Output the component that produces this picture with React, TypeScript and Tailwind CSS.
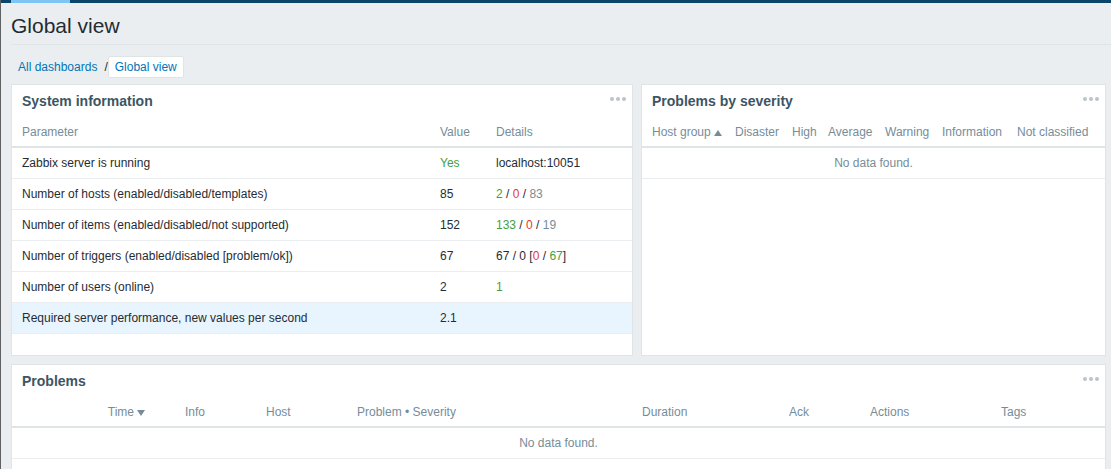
import type { ReactNode } from "react";

const GREEN = "text-[#429e47]";
const RED = "text-[#e33734]";
const GREY = "text-[#768d99]";

type Column = { label: ReactNode; width: string; align?: string; sort?: "ascending" | "descending" };

function SortArrow({ up }: { up?: boolean }) {
  return (
    <svg width="8" height="6" viewBox="0 0 8 6" className="mt-0.5 fill-[#768d99]" aria-hidden="true">
      <path d={up ? "M4 0L8 6H0Z" : "M0 0H8L4 6Z"} />
    </svg>
  );
}

function Panel({ title, className = "", children }: { title: string; className?: string; children: ReactNode }) {
  return (
    <section className={`min-w-0 border border-[#dfe4e7] bg-white ${className}`}>
      <header className="flex h-8 items-center justify-between pr-1.5 pl-2.5">
        <h2 className="text-sm font-bold text-[#3c5563]">{title}</h2>
        <button type="button" aria-label={`${title} actions`} className="-mt-1 cursor-pointer">
          <svg width="16" height="4" viewBox="0 0 16 4" className="block fill-[#b9c5cc]" aria-hidden="true">
            <circle cx="2" cy="2" r="2" />
            <circle cx="8" cy="2" r="2" />
            <circle cx="14" cy="2" r="2" />
          </svg>
        </button>
      </header>
      <div className="overflow-x-auto">{children}</div>
    </section>
  );
}

function Table({ columns, children }: { columns: Column[]; children: ReactNode }) {
  return (
    <table className="w-full table-fixed border-separate border-spacing-0 whitespace-nowrap">
      <thead>
        <tr>
          {columns.map((c, i) => (
            <th
              key={i}
              scope="col"
              aria-sort={c.sort}
              className={`h-[31px] border-b-2 border-[#dfe4e7] pl-2.5 font-normal text-[#768d99] ${c.width} ${c.align ?? "text-left"}`}
            >
              {c.sort ? (
                <a href="#sort" className="inline-flex items-center gap-[3px]">
                  {c.label}
                  <SortArrow up={c.sort === "ascending"} />
                </a>
              ) : (
                c.label
              )}
            </th>
          ))}
        </tr>
      </thead>
      <tbody>{children}</tbody>
    </table>
  );
}

function NoData({ span }: { span: number }) {
  return (
    <tr>
      <td colSpan={span} className="h-[31px] border-b border-[#ebeef0] text-center text-[#768d99]">
        No data found.
      </td>
    </tr>
  );
}

const infoColumns: Column[] = [
  { label: "Parameter", width: "w-[418px]" },
  { label: "Value", width: "w-[56px]" },
  { label: "Details", width: "w-[146px]" },
];

const infoRows: { name: string; value: ReactNode; details?: ReactNode; active?: boolean }[] = [
  { name: "Zabbix server is running", value: <span className={GREEN}>Yes</span>, details: "localhost:10051" },
  {
    name: "Number of hosts (enabled/disabled/templates)",
    value: "85",
    details: (
      <>
        <span className={GREEN}>2</span> / <span className={RED}>0</span> / <span className={GREY}>83</span>
      </>
    ),
  },
  {
    name: "Number of items (enabled/disabled/not supported)",
    value: "152",
    details: (
      <>
        <span className={GREEN}>133</span> / <span className={RED}>0</span> / <span className={GREY}>19</span>
      </>
    ),
  },
  {
    name: "Number of triggers (enabled/disabled [problem/ok])",
    value: "67",
    details: (
      <>
        67 / 0 [<span className={RED}>0</span> / <span className={GREEN}>67</span>]
      </>
    ),
  },
  { name: "Number of users (online)", value: "2", details: <span className={GREEN}>1</span> },
  { name: "Required server performance, new values per second", value: "2.1", active: true },
];

const severityColumns: Column[] = [
  { label: "Host group", width: "w-[83px]", sort: "ascending" },
  { label: "Disaster", width: "w-[57px]" },
  { label: "High", width: "w-[36px]" },
  { label: "Average", width: "w-[57px]" },
  { label: "Warning", width: "w-[57px]" },
  { label: "Information", width: "w-[75px]" },
  { label: "Not classified", width: "w-[98px]" },
];

const problemColumns: Column[] = [
  { label: "Time", width: "w-[143px]", align: "pr-2.5 text-right", sort: "descending" },
  { label: "", width: "w-[20px]" },
  { label: "Info", width: "w-[81px]" },
  { label: "Host", width: "w-[91px]" },
  { label: "Problem • Severity", width: "w-[285px]" },
  { label: "Duration", width: "w-[147px]" },
  { label: "Ack", width: "w-[81px]" },
  { label: "Actions", width: "w-[131px]" },
  { label: "Tags", width: "w-[114px]" },
];

export default function App() {
  return (
    <div className="flex min-h-screen flex-col border-l border-[#5f6062] bg-[#ebeef0] font-['Liberation_Sans',Arial,sans-serif] text-xs text-[#1f2c33]">
      <div className="h-[3px] bg-[#0a466a] pl-2.5">
        <div className="h-full w-[59px] bg-[#7dc5f5]" />
      </div>
      <div className="flex grow flex-col pl-2.5">
        <h1 className="h-[42px] border-b border-[#dfe4e7] pt-2 text-[21px] leading-[30px]">Global view</h1>
        <nav aria-label="Breadcrumb" className="flex h-[39px] items-center pt-1 pl-[7px]">
          <a href="#dashboards" className="text-[#0275b8]">
            All dashboards
          </a>
          <span className="pl-[7px]">/</span>
          <a
            href="#global-view"
            aria-current="page"
            className="flex h-[22px] items-center rounded-xs border border-[#dfe4e7] bg-white px-1.5 text-[#0275b8]"
          >
            Global view
          </a>
        </nav>
        <main className="flex grow flex-col gap-2 pr-[5px]">
          <div className="grid grid-cols-[622fr_465fr] gap-2">
            <Panel title="System information" className="pb-[21px]">
              <Table columns={infoColumns}>
                {infoRows.map((r) => (
                  <tr key={r.name} className={r.active ? "bg-[#e8f5ff]" : ""}>
                    <td className="h-[31px] border-b border-[#ebeef0] pl-2.5">{r.name}</td>
                    <td className="border-b border-[#ebeef0] pl-2.5">{r.value}</td>
                    <td className="border-b border-[#ebeef0] pl-2.5">{r.details}</td>
                  </tr>
                ))}
              </Table>
            </Panel>
            <Panel title="Problems by severity">
              <Table columns={severityColumns}>
                <NoData span={7} />
              </Table>
            </Panel>
          </div>
          <Panel title="Problems" className="grow border-b-0">
            <Table columns={problemColumns}>
              <NoData span={9} />
            </Table>
          </Panel>
        </main>
      </div>
    </div>
  );
}
